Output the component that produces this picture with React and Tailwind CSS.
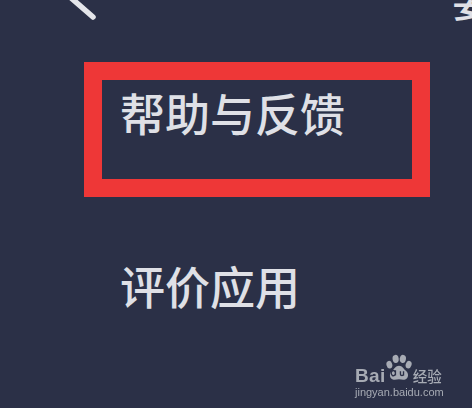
const cjk = { fontFamily: '"Noto Sans CJK SC", "Noto Sans", sans-serif' };

function Paw() {
  return (
    <svg width="26" height="31" viewBox="0 0 27 31" className="shrink-0" aria-hidden="true">
      <g fill="#a7abb4">
        <ellipse cx="3.5" cy="10.5" rx="3" ry="4" transform="rotate(-15 3.5 10.5)" />
        <ellipse cx="10" cy="4.5" rx="3.2" ry="4.2" transform="rotate(-8 10 4.5)" />
        <ellipse cx="17.5" cy="4.5" rx="3.2" ry="4.2" transform="rotate(10 17.5 4.5)" />
        <ellipse cx="23.5" cy="10.5" rx="3" ry="4" transform="rotate(18 23.5 10.5)" />
        <path d="M13.5 11.5c3.4 0 4.6 3.2 7.2 5.2 2.8 2.2 3.2 7-.2 8.8-2.5 1.3-4.6.2-7 .2s-4.6 1.1-7-.2c-3.4-1.8-3-6.6-.2-8.8 2.6-2 3.8-5.2 7.2-5.2z" />
      </g>
      <path d="M9.8 16.2v5.6M9.8 19.2a2.2 2.7 0 1 0 0 .1M15 17.2v3.2c0 1.8 3.2 1.8 3.2 0v-3.2M18.2 17.2v4.6" fill="none" stroke="#2b3047" strokeWidth="1.4" />
    </svg>
  );
}

export default function App() {
  return (
    <div className="relative h-[408px] w-[472px] overflow-hidden bg-[#2b3047]" style={cjk}>
      <header className="flex h-[62px] items-start justify-between">
        <svg width="100" height="22" viewBox="0 0 100 22" aria-hidden="true">
          <path d="M70 -3 L93 17" fill="none" stroke="#e4e5ea" strokeWidth="5.5" strokeLinecap="round" />
        </svg>
        <span className="mt-[-24px] mr-[-24px] text-[44px] font-medium leading-[44px] text-[#dfe0e6]">要</span>
      </header>

      <div className="ml-[84px] h-[135px] w-[346px] border-[18px] border-[#ee3737] pl-[18px] pt-[5px]">
        <p className="text-[45px] font-medium leading-[56px] text-[#dfe0e6] whitespace-nowrap">帮助与反馈</p>
      </div>

      <p className="ml-[120px] mt-[61px] text-[45px] font-medium leading-[56px] text-[#dfe0e6]">评价应用</p>

      <div className="absolute left-[355px] top-[354px] w-[92px] text-[#a7abb4] blur-[0.5px]">
        <div className="flex items-end">
          <span className="font-['Liberation_Sans',sans-serif] text-[19px] font-bold leading-[19px] tracking-[0.4px]">Bai</span>
          <Paw />
          <span className="ml-[1px] text-[14.5px] font-medium leading-[19px]">经验</span>
        </div>
        <p className="mt-[1px] font-['Liberation_Sans',sans-serif] text-[11px] leading-[12px] whitespace-nowrap">jingyan.baidu.com</p>
      </div>
    </div>
  );
}
